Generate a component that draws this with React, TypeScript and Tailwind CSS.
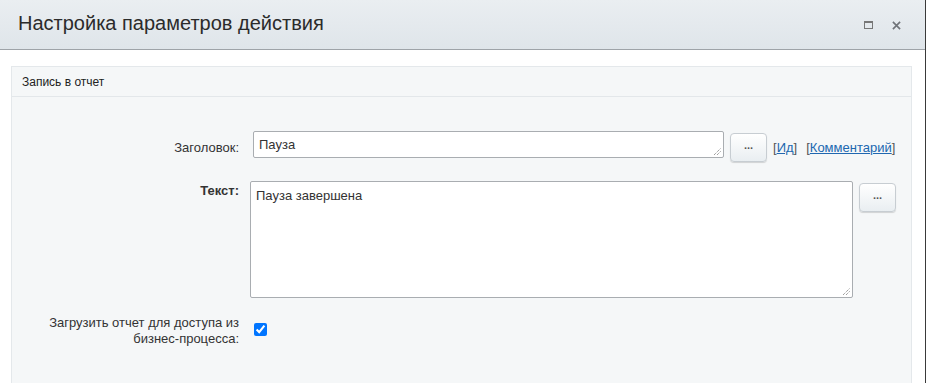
import React from "react";

const Dots = ({ className = "" }: { className?: string }) => (
  <button
    className={`flex items-center justify-center rounded-[4px] border border-[#c7cdd2] bg-gradient-to-b from-[#ffffff] to-[#e9eef1] shadow-[0_1px_1px_rgba(0,0,0,0.15)] text-[11px] font-bold text-[#555] leading-none pb-[4px] ${className}`}
  >
    ...
  </button>
);

const Grip = () => (
  <svg className="absolute right-[2px] bottom-[2px]" width="8" height="8" viewBox="0 0 8 8">
    <path d="M1 8 L8 1 M4 8 L8 4" stroke="#777" strokeWidth="1" strokeDasharray="1 1" />
  </svg>
);

export default function App() {
  return (
    <div className="w-[926px] h-[383px] overflow-hidden bg-white border-r border-[#3a3a3a] flex flex-col font-['Liberation_Sans',Arial,sans-serif] text-[13px] text-[#333]">
      {/* header */}
      <div className="h-[50px] shrink-0 flex items-center justify-between bg-gradient-to-b from-[#eaeef1] to-[#dfe5ea] border-b border-[#9ea3a8] pl-[18px] pr-[24px]">
        <h1 className="text-[20px] text-[#2b2b2b] font-normal -mt-[4px]">Настройка параметров действия</h1>
        <div className="flex items-center gap-[19px] text-[#6f7378] mt-[1px]">
          <div className="w-[9px] h-[8px] border border-[#777] border-t-[2px]" />
          <svg width="9" height="9" viewBox="0 0 10 10">
            <path d="M1 1 L9 9 M9 1 L1 9" stroke="#6f7378" strokeWidth="1.8" />
          </svg>
        </div>
      </div>

      {/* body */}
      <div className="flex-1 pt-[16px] pl-[11px] pr-[13px]">
        <div className="h-full border border-[#e4e8eb] border-b-0 bg-[#f5f7f8]">
          <div className="h-[30px] flex items-center pl-[10px] border-b border-[#e3e7ea] text-[12px] text-[#222]">
            Запись в отчет
          </div>

          <div className="pt-[34px]">
            {/* row 1 */}
            <div className="flex items-start">
              <div className="w-[227px] shrink-0 text-right text-[#333] pt-[7px]">Заголовок:</div>
              <div className="relative ml-[14px] w-[471px] h-[27px] bg-white border border-[#a9adb1] rounded-[2px] px-[5px] flex items-center text-[#333]">
                Пауза
                <Grip />
              </div>
              <Dots className="ml-[6px] mt-[2px] w-[37px] h-[29px]" />
              <div className="ml-[6px] mt-[7px] text-[#555]">
                [<span className="text-[#2067b0] underline">Ид</span>]
              </div>
              <div className="ml-[9px] mt-[7px] text-[#555]">
                [<span className="text-[#2067b0] underline">Комментарий</span>]
              </div>
            </div>

            {/* row 2 */}
            <div className="flex items-start mt-[19px]">
              <div className="w-[227px] shrink-0 text-right font-bold text-[#333] pt-[0px]">Текст:</div>
              <div className="relative ml-[11px] w-[603px] h-[117px] bg-white border border-[#a9adb1] rounded-[2px] px-[5px] pt-[4px] text-[#333]">
                Пауза завершена
                <Grip />
              </div>
              <Dots className="ml-[6px] mt-[2px] w-[37px] h-[29px]" />
            </div>

            {/* row 3 */}
            <div className="flex items-start mt-[17px]">
              <div className="w-[227px] shrink-0 text-right text-[#333] leading-[16px]">
                Загрузить отчет для доступа из
                <br />
                бизнес-процесса:
              </div>
              <input
                type="checkbox"
                checked
                readOnly
                className="ml-[15px] mt-[8px] w-[13px] h-[13px]"
              />
            </div>
          </div>
        </div>
      </div>
    </div>
  );
}
